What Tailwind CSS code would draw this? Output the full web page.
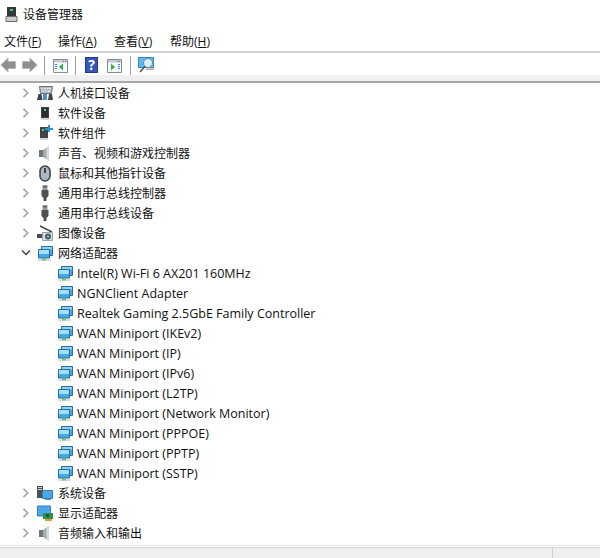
<!DOCTYPE html>
<html lang="zh-CN">
<head>
<meta charset="UTF-8">
<title>设备管理器</title>
<script src="https://cdn.jsdelivr.net/npm/@tailwindcss/browser@4"></script>
</head>
<body class="bg-white w-[600px] h-[558px] overflow-hidden flex flex-col font-['Open_Sans','Noto_Sans_CJK_SC',sans-serif] text-[12px] leading-5 text-[#111]">
<svg class="hidden">
  <symbol id="net" viewBox="0 0 16 16">
    <path d="M4.500 1.500h11v9h-11z" fill="#4aa6e2" stroke="#2a6f9e"/>
    <path d="M5 2h10v2.500H5z" fill="#8fd0f2"/>
    <path d="M1.500 4.500h11v8.500h-11z" fill="#45a8e6" stroke="#256f9f"/>
    <path d="M2 5h10v4H2z" fill="#a4def8"/>
    <path d="M5 13.500h4v1H5z" fill="#5cb85c"/>
    <path d="M1 14.500h4v1H1zM9 14.500h5v1H9z" fill="#b6bcbf"/>
    <path d="M5 14.500h4v1H5z" fill="#3fa34d"/>
  </symbol>
  <symbol id="chev" viewBox="0 0 8 10">
    <path d="M1.500 .800l4.200 4.200-4.200 4.200" fill="none" stroke="#a6a6a6" stroke-width="1.700"/>
  </symbol>
  <symbol id="device" viewBox="0 0 16 16">
    <path d="M4 2h8v13H4z" fill="#3f4447"/>
    <path d="M5 3h6v9H5z" fill="#2a2e31"/>
    <path d="M4 13h8v2H4z" fill="#d5d8da"/>
    <path d="M7 4h2v2H7z" fill="#46e06a"/>
  </symbol>
  <symbol id="usb" viewBox="0 0 16 16">
    <path d="M5.500 0h5v5h-5z" fill="#9a9a9a"/>
    <path d="M6.500 1h1v1.500h-1zM8.500 1h1v1.500h-1z" fill="#333"/>
    <path d="M4.500 5h7v6l-2 2v3h-3v-3l-2-2z" fill="#4f5254"/>
  </symbol>
  <symbol id="speaker" viewBox="0 0 16 16">
    <path d="M2 5h4v7H2z" fill="#6d7579"/>
    <path d="M6 5l6-4v15l-6-4z" fill="#a4abaf"/>
    <path d="M9.500 2.500l2.500-1.500v15l-2.500-1.500z" fill="#d9dcde"/>
  </symbol>
  <symbol id="win" viewBox="0 0 15 14">
    <path d="M.5.500h14v13H.5z" fill="#f7f8f9" stroke="#7f8d99"/>
    <path d="M1 1h13v2.500H1z" fill="#c3ccd4"/>
    <path d="M10 2h1v1h-1zM12 2h1v1h-1z" fill="#5d6e7c"/>
  </symbol>
</svg>

<div class="h-[28px] flex items-center pl-[3px] shrink-0">
  <svg class="w-[16px] h-[17px] mt-[1px]" viewBox="0 0 16 17"><path d="M4 1h9v10H4z" fill="#33383a"/><path d="M7 3h3v2H7z" fill="#3ed268"/><path d="M3 10.500h11v5H3z" fill="#c9cdcf" stroke="#6c6c6c"/></svg>
  <span class="ml-[4px] mt-[1px]">设备管理器</span>
</div>

<div class="h-[25px] flex items-center pl-[4px] pt-[4px] border-b-2 border-[#cfcfcf] shrink-0">
  <span class="w-[54px]">文件(<span class="underline">F</span>)</span>
  <span class="w-[56px]">操作(<span class="underline">A</span>)</span>
  <span class="w-[56px]">查看(<span class="underline">V</span>)</span>
  <span>帮助(<span class="underline">H</span>)</span>
</div>

<div class="h-[22px] flex items-center pt-[2px] shrink-0">
  <svg class="w-[16px] h-[16px]" viewBox="0 0 16 16"><path d="M15.500 4.500H8V1L.8 8 8 15v-3.500h7.500z" fill="#8f8f8f" stroke="#b8b8b8"/></svg>
  <svg class="w-[16px] h-[16px] ml-[6px]" viewBox="0 0 16 16"><path d="M.5 4.500H8V1l7.200 7L8 15v-3.500H.5z" fill="#8f8f8f" stroke="#b8b8b8"/></svg>
  <div class="w-px h-[19px] bg-[#a0a0a0] ml-[6px]"></div>
  <svg class="w-[15px] h-[14px] ml-[8px] mt-[2px]" viewBox="0 0 15 14"><use href="#win"/><path d="M2 5h2v1H2zM2 7h2v1H2zM2 9h2v1H2z" fill="#3b82d6"/><path d="M10 4.500v7L6 8z" fill="#2bb04a"/></svg>
  <div class="w-px h-[19px] bg-[#a0a0a0] ml-[7px]"></div>
  <div class="w-[13px] h-[16px] ml-[9px] bg-[#3557b8] border border-[#20398c] text-white text-[14px] leading-[14px] font-bold flex items-center justify-center">?</div>
  <svg class="w-[15px] h-[14px] ml-[9px] mt-[2px]" viewBox="0 0 15 14"><use href="#win"/><path d="M11 5h2v1h-2zM11 7h2v1h-2zM11 9h2v1h-2z" fill="#3b82d6"/><path d="M4 4.500v7L8 8z" fill="#2bb04a"/></svg>
  <div class="w-px h-[19px] bg-[#a0a0a0] ml-[8px]"></div>
  <svg class="w-[17px] h-[16px] ml-[7px]" viewBox="0 0 17 16"><path d="M.5.500h15v10H.5z" fill="#5cb8ee" stroke="#2f86c0"/><path d="M8 11.500h8V13H8z" fill="#a8a8a8"/><circle cx="10" cy="6" r="4.500" fill="#d5eefa" stroke="#7c8c96"/><path d="M7 9.500l-5 5.500" stroke="#555" stroke-width="1.600"/></svg>
</div>

<div class="h-[8px] bg-[#f0f0f0] border-b-2 border-[#a8a8a8] shrink-0"></div>

<ul class="flex-1 overflow-hidden [&_span]:mt-[2px]">
  <li class="h-[20px] flex items-center"><svg class="w-[8px] h-[10px] ml-[22px]"><use href="#chev"/></svg><svg class="w-[16px] h-[16px] ml-[7px]" viewBox="0 0 16 16"><path d="M2.500 1.500h13l-1 7h-11z" fill="#b4bcc2" stroke="#6a7278"/><path d="M4 3h1.500v1H4zM7 3h1.500v1H7zM10 3h1.500v1H10zM12.500 3H14v1h-1.500zM5 5.500h1.500v1H5zM8 5.500h1.500v1H8zM11 5.500h1.500v1H11z" fill="#f4f6f7"/><path d="M0 15l1.500-6h3l1 6zM11 15l1-6h3l1 6z" fill="#3d4347"/><path d="M6 15V9h4v6z" fill="#4d8fd0"/></svg><span class="ml-[5px]">人机接口设备</span></li>
  <li class="h-[20px] flex items-center"><svg class="w-[8px] h-[10px] ml-[22px]"><use href="#chev"/></svg><svg class="w-[16px] h-[16px] ml-[7px]"><use href="#device"/></svg><span class="ml-[5px]">软件设备</span></li>
  <li class="h-[20px] flex items-center"><svg class="w-[8px] h-[10px] ml-[22px]"><use href="#chev"/></svg><svg class="w-[16px] h-[16px] ml-[7px]" viewBox="0 0 16 16"><path d="M3 2h8v13H3z" fill="#3f4447"/><path d="M3 13h8v2H3z" fill="#d5d8da"/><path d="M5 4h2v2H5z" fill="#46e06a"/><path d="M11 0h2v3h3v2h-3v2h-2V5H8V3h3z" fill="#2b8fe0"/></svg><span class="ml-[5px]">软件组件</span></li>
  <li class="h-[20px] flex items-center"><svg class="w-[8px] h-[10px] ml-[22px]"><use href="#chev"/></svg><svg class="w-[16px] h-[16px] ml-[7px]"><use href="#speaker"/></svg><span class="ml-[5px]">声音、视频和游戏控制器</span></li>
  <li class="h-[20px] flex items-center"><svg class="w-[8px] h-[10px] ml-[22px]"><use href="#chev"/></svg><svg class="w-[16px] h-[17px] ml-[7px]" viewBox="0 0 16 17"><rect x="3" y="1" width="10" height="15" rx="5" fill="#aeb8c0" stroke="#3c4246" stroke-width="1.500"/><path d="M8 3v5" stroke="#3c4246" stroke-width="2"/></svg><span class="ml-[5px]">鼠标和其他指针设备</span></li>
  <li class="h-[20px] flex items-center"><svg class="w-[8px] h-[10px] ml-[22px]"><use href="#chev"/></svg><svg class="w-[16px] h-[16px] ml-[7px]"><use href="#usb"/></svg><span class="ml-[5px]">通用串行总线控制器</span></li>
  <li class="h-[20px] flex items-center"><svg class="w-[8px] h-[10px] ml-[22px]"><use href="#chev"/></svg><svg class="w-[16px] h-[16px] ml-[7px]"><use href="#usb"/></svg><span class="ml-[5px]">通用串行总线设备</span></li>
  <li class="h-[20px] flex items-center"><svg class="w-[8px] h-[10px] ml-[22px]"><use href="#chev"/></svg><svg class="w-[16px] h-[16px] ml-[7px]" viewBox="0 0 16 16"><path d="M3 1l12 6" stroke="#444" stroke-width="1.500"/><path d="M0 9h5v4H0z" fill="#4a4a4a"/><path d="M5.500 7.500h10v8h-10z" fill="#d9dee1" stroke="#9aa2a7"/><circle cx="11" cy="11.500" r="3" fill="#41585f"/><circle cx="11" cy="11.500" r="1.300" fill="#7fb6c7"/></svg><span class="ml-[5px]">图像设备</span></li>
  <li class="h-[20px] flex items-center"><svg class="w-[10px] h-[8px] ml-[21px]" viewBox="0 0 10 8"><path d="M1 1.500l4 4 4-4" fill="none" stroke="#404040" stroke-width="1.500"/></svg><svg class="w-[16px] h-[16px] ml-[6px]"><use href="#net"/></svg><span class="ml-[5px]">网络适配器</span></li>
  <li class="h-[20px] flex items-center pl-[57px] text-[12.5px]"><svg class="w-[16px] h-[16px]"><use href="#net"/></svg><span class="ml-[4px]">Intel(R) Wi-Fi 6 AX201 160MHz</span></li>
  <li class="h-[20px] flex items-center pl-[57px] text-[12.5px]"><svg class="w-[16px] h-[16px]"><use href="#net"/></svg><span class="ml-[4px]">NGNClient Adapter</span></li>
  <li class="h-[20px] flex items-center pl-[57px] text-[12.5px]"><svg class="w-[16px] h-[16px]"><use href="#net"/></svg><span class="ml-[4px]">Realtek Gaming 2.5GbE Family Controller</span></li>
  <li class="h-[20px] flex items-center pl-[57px] text-[12.5px]"><svg class="w-[16px] h-[16px]"><use href="#net"/></svg><span class="ml-[4px]">WAN Miniport (IKEv2)</span></li>
  <li class="h-[20px] flex items-center pl-[57px] text-[12.5px]"><svg class="w-[16px] h-[16px]"><use href="#net"/></svg><span class="ml-[4px]">WAN Miniport (IP)</span></li>
  <li class="h-[20px] flex items-center pl-[57px] text-[12.5px]"><svg class="w-[16px] h-[16px]"><use href="#net"/></svg><span class="ml-[4px]">WAN Miniport (IPv6)</span></li>
  <li class="h-[20px] flex items-center pl-[57px] text-[12.5px]"><svg class="w-[16px] h-[16px]"><use href="#net"/></svg><span class="ml-[4px]">WAN Miniport (L2TP)</span></li>
  <li class="h-[20px] flex items-center pl-[57px] text-[12.5px]"><svg class="w-[16px] h-[16px]"><use href="#net"/></svg><span class="ml-[4px]">WAN Miniport (Network Monitor)</span></li>
  <li class="h-[20px] flex items-center pl-[57px] text-[12.5px]"><svg class="w-[16px] h-[16px]"><use href="#net"/></svg><span class="ml-[4px]">WAN Miniport (PPPOE)</span></li>
  <li class="h-[20px] flex items-center pl-[57px] text-[12.5px]"><svg class="w-[16px] h-[16px]"><use href="#net"/></svg><span class="ml-[4px]">WAN Miniport (PPTP)</span></li>
  <li class="h-[20px] flex items-center pl-[57px] text-[12.5px]"><svg class="w-[16px] h-[16px]"><use href="#net"/></svg><span class="ml-[4px]">WAN Miniport (SSTP)</span></li>
  <li class="h-[20px] flex items-center"><svg class="w-[8px] h-[10px] ml-[22px]"><use href="#chev"/></svg><svg class="w-[16px] h-[16px] ml-[7px]" viewBox="0 0 16 16"><path d="M0 1h6v12H0z" fill="#4a5054"/><path d="M1 2h4v1H1zM1 4h4v1H1z" fill="#d0d4d6"/><path d="M5.500 5.500h10v8h-10z" fill="#4aa8e6" stroke="#2f7fb8"/><path d="M8 14h6v1H8z" fill="#7a8a94"/></svg><span class="ml-[5px]">系统设备</span></li>
  <li class="h-[20px] flex items-center"><svg class="w-[8px] h-[10px] ml-[22px]"><use href="#chev"/></svg><svg class="w-[17px] h-[16px] ml-[7px]" viewBox="0 0 17 16"><path d="M.5 1h13v10H.5z" fill="#4aa8e6" stroke="#2f7fb8"/><path d="M6 8h10v6H6z" fill="#2f8f4f"/><path d="M8 14h7v2H8z" fill="#e0a030"/><path d="M9 9h3v3H9z" fill="#1f5a35"/></svg><span class="ml-[4px]">显示适配器</span></li>
  <li class="h-[20px] flex items-center"><svg class="w-[8px] h-[10px] ml-[22px]"><use href="#chev"/></svg><svg class="w-[16px] h-[16px] ml-[7px]"><use href="#speaker"/></svg><span class="ml-[5px]">音频输入和输出</span></li>
</ul>

<div class="h-[15px] shrink-0 pt-[2px] flex flex-col">
  <div class="h-px bg-[#e2e2e2]"></div>
  <div class="flex-1 mt-px bg-[#efefef] border-t border-[#d4d4d4] flex">
    <div class="w-[553px] border-r border-[#d0d0d0]"></div>
  </div>
</div>
</body>
</html>
